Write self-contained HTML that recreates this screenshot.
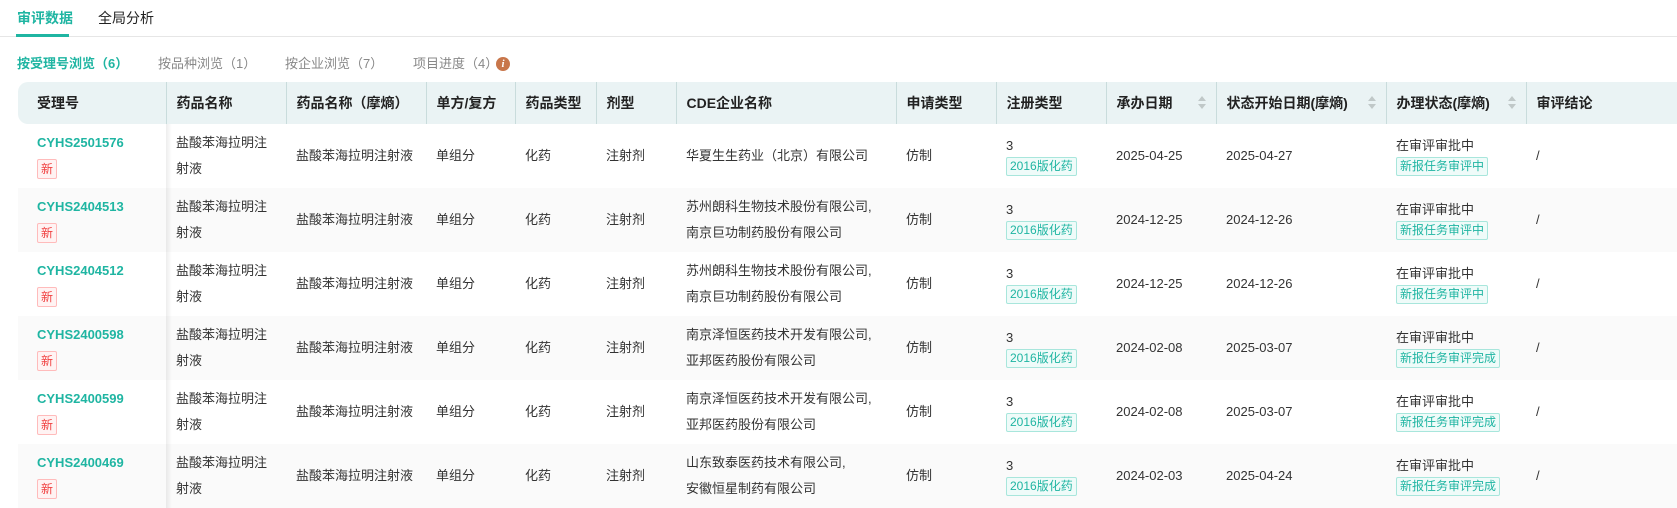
<!DOCTYPE html>
<html><head><meta charset="utf-8">
<style>
*{margin:0;padding:0;box-sizing:border-box}
body{width:1677px;height:506px;overflow:hidden;background:#fff;font-family:"Liberation Sans","Noto Sans CJK SC",sans-serif;color:#333;position:relative}
.tabs{position:absolute;left:0;top:0;width:1677px;height:37px;border-bottom:1px solid #e6e6e6}
.tab{position:absolute;top:8px;font-size:14px;line-height:20px;color:#222}
.tab.on{color:#1fb5a2;font-weight:bold}
.ul{position:absolute;left:16px;top:34px;width:53px;height:3px;background:#1fb5a2}
.sub{position:absolute;top:54px;font-size:13px;line-height:20px;color:#888}
.sub.on{color:#1fb5a2;font-weight:bold}
.info{position:absolute;left:496px;top:57px;width:14px;height:14px;border-radius:50%;background:#c8764a;color:#fff;font-size:11px;font-style:italic;font-weight:bold;text-align:center;line-height:14px;font-family:"Liberation Serif",serif}
table{position:absolute;left:18px;top:82px;width:1659px;border-collapse:collapse;table-layout:fixed;font-size:13px}
th{height:42px;background:#eaf3f4;text-align:left;font-weight:bold;color:#222;padding:0 10px;border-left:1px solid #c9dcdc;font-size:14px;position:relative;white-space:nowrap}
th:first-child{border-left:none;border-radius:10px 0 0 10px;padding-left:19px}
td{height:64px;padding:0 10px;vertical-align:middle;line-height:26px;color:#333}
td:first-child{padding-left:19px;line-height:20px;position:relative}
td:first-child:after{content:"";position:absolute;right:-6px;top:0;bottom:0;width:6px;background:linear-gradient(to right,rgba(0,0,0,.07),rgba(0,0,0,0))}
tr.g td{background:#fafafa}
.id{color:#1fb5a2;font-weight:bold;font-size:13px;display:block;margin-bottom:6px}
.new{display:inline-block;border:1px solid #fbb;background:#fff3f3;color:#f04040;font-size:12px;line-height:18px;padding:0 3px;border-radius:2px}
.tg{display:inline-block;border:1px solid #a8e6dc;background:#effbf9;color:#1fb5a2;font-size:12px;line-height:17px;padding:0 3px;border-radius:2px}
.two{line-height:20px}
.sort{position:absolute;right:10px;top:14px;width:8px;height:14px}
.sort:before{content:"";position:absolute;left:0;top:0;border:4px solid transparent;border-bottom:5px solid #c0c8c8;border-top:0}
.sort:after{content:"";position:absolute;left:0;top:8px;border:4px solid transparent;border-top:5px solid #c0c8c8;border-bottom:0}
</style></head><body>
<div class="tabs">
<div class="tab on" style="left:17px">审评数据</div>
<div class="tab" style="left:98px">全局分析</div>
<div class="ul"></div>
</div>
<div class="sub on" style="left:17px">按受理号浏览（6）</div>
<div class="sub" style="left:158px">按品种浏览（1）</div>
<div class="sub" style="left:285px">按企业浏览（7）</div>
<div class="sub" style="left:413px">项目进度（4）</div>
<div class="info">i</div>
<table>
<colgroup><col style="width:148px"><col style="width:120px"><col style="width:140px"><col style="width:89px"><col style="width:81px"><col style="width:80px"><col style="width:220px"><col style="width:100px"><col style="width:110px"><col style="width:110px"><col style="width:170px"><col style="width:140px"><col style="width:151px"></colgroup>
<tr><th>受理号</th><th>药品名称</th><th>药品名称（摩熵）</th><th>单方/复方</th><th>药品类型</th><th>剂型</th><th>CDE企业名称</th><th>申请类型</th><th>注册类型</th><th>承办日期<span class="sort"></span></th><th>状态开始日期(摩熵)<span class="sort"></span></th><th>办理状态(摩熵)<span class="sort"></span></th><th>审评结论</th></tr>
<tr><td><span class="id">CYHS2501576</span><span class="new">新</span></td><td>盐酸苯海拉明注射液</td><td>盐酸苯海拉明注射液</td><td>单组分</td><td>化药</td><td>注射剂</td><td>华夏生生药业（北京）有限公司</td><td>仿制</td><td class="two">3<br><span class="tg">2016版化药</span></td><td>2025-04-25</td><td>2025-04-27</td><td class="two">在审评审批中<br><span class="tg">新报任务审评中</span></td><td>/</td></tr>
<tr class="g"><td><span class="id">CYHS2404513</span><span class="new">新</span></td><td>盐酸苯海拉明注射液</td><td>盐酸苯海拉明注射液</td><td>单组分</td><td>化药</td><td>注射剂</td><td>苏州朗科生物技术股份有限公司,<br>南京巨功制药股份有限公司</td><td>仿制</td><td class="two">3<br><span class="tg">2016版化药</span></td><td>2024-12-25</td><td>2024-12-26</td><td class="two">在审评审批中<br><span class="tg">新报任务审评中</span></td><td>/</td></tr>
<tr><td><span class="id">CYHS2404512</span><span class="new">新</span></td><td>盐酸苯海拉明注射液</td><td>盐酸苯海拉明注射液</td><td>单组分</td><td>化药</td><td>注射剂</td><td>苏州朗科生物技术股份有限公司,<br>南京巨功制药股份有限公司</td><td>仿制</td><td class="two">3<br><span class="tg">2016版化药</span></td><td>2024-12-25</td><td>2024-12-26</td><td class="two">在审评审批中<br><span class="tg">新报任务审评中</span></td><td>/</td></tr>
<tr class="g"><td><span class="id">CYHS2400598</span><span class="new">新</span></td><td>盐酸苯海拉明注射液</td><td>盐酸苯海拉明注射液</td><td>单组分</td><td>化药</td><td>注射剂</td><td>南京泽恒医药技术开发有限公司,<br>亚邦医药股份有限公司</td><td>仿制</td><td class="two">3<br><span class="tg">2016版化药</span></td><td>2024-02-08</td><td>2025-03-07</td><td class="two">在审评审批中<br><span class="tg">新报任务审评完成</span></td><td>/</td></tr>
<tr><td><span class="id">CYHS2400599</span><span class="new">新</span></td><td>盐酸苯海拉明注射液</td><td>盐酸苯海拉明注射液</td><td>单组分</td><td>化药</td><td>注射剂</td><td>南京泽恒医药技术开发有限公司,<br>亚邦医药股份有限公司</td><td>仿制</td><td class="two">3<br><span class="tg">2016版化药</span></td><td>2024-02-08</td><td>2025-03-07</td><td class="two">在审评审批中<br><span class="tg">新报任务审评完成</span></td><td>/</td></tr>
<tr class="g"><td><span class="id">CYHS2400469</span><span class="new">新</span></td><td>盐酸苯海拉明注射液</td><td>盐酸苯海拉明注射液</td><td>单组分</td><td>化药</td><td>注射剂</td><td>山东致泰医药技术有限公司,<br>安徽恒星制药有限公司</td><td>仿制</td><td class="two">3<br><span class="tg">2016版化药</span></td><td>2024-02-03</td><td>2025-04-24</td><td class="two">在审评审批中<br><span class="tg">新报任务审评完成</span></td><td>/</td></tr>
</table>
</body></html>
